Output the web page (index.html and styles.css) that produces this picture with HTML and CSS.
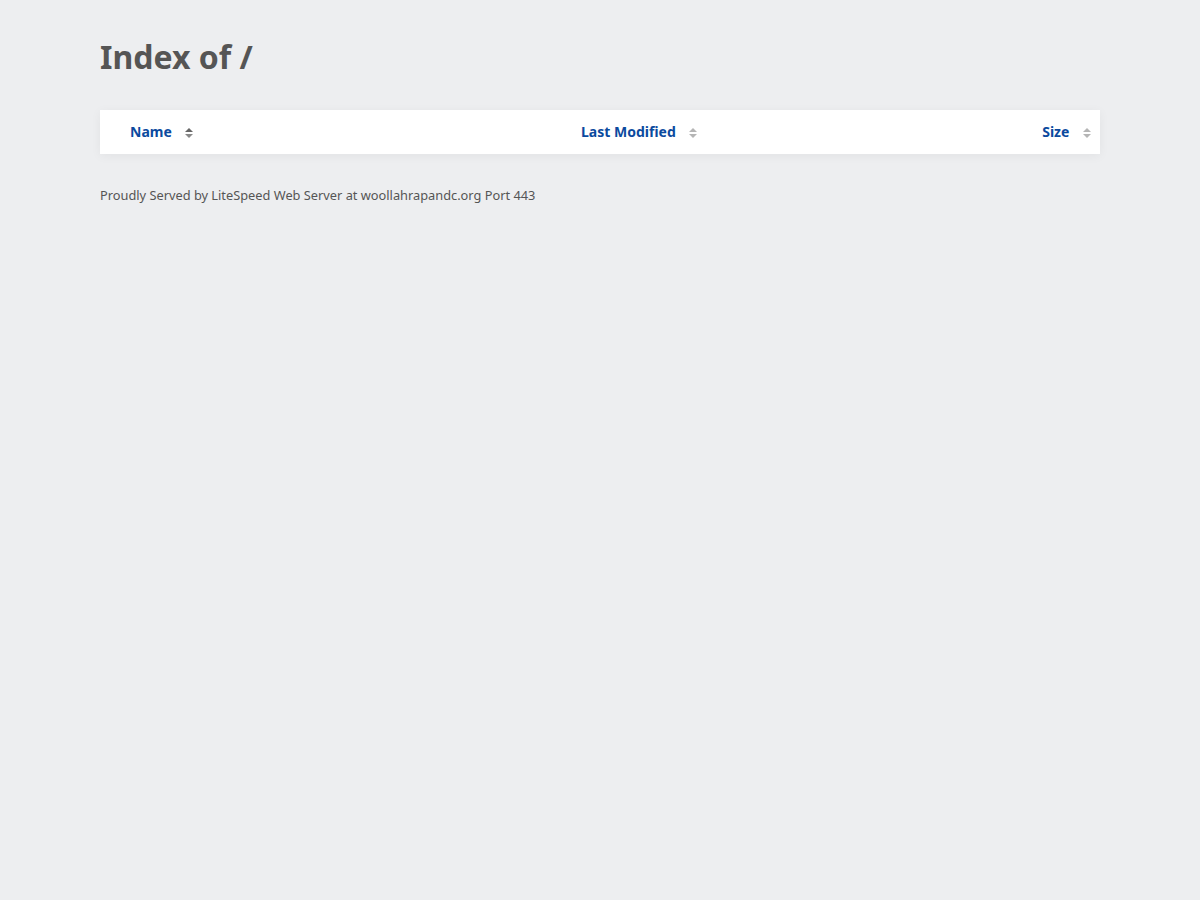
FILE: index.html
```html
<!DOCTYPE html>
<html lang="en">
  <head>
    <meta charset="UTF-8" />
    <title>Index of /</title>
    <link rel="stylesheet" href="styles.css">
  </head>
  <body>
    <div class="page">
      <h1>Index of /</h1>
      <table class="listing">
        <thead>
          <tr>
            <th class="col-name">
              <a href="?C=N&amp;O=D">Name</a>
              <span class="sort sort-asc"><i class="up"></i><i class="down"></i></span>
            </th>
            <th class="col-date">
              <a href="?C=M&amp;O=A">Last Modified</a>
              <span class="sort"><i class="up"></i><i class="down"></i></span>
            </th>
            <th class="col-size">
              <a href="?C=S&amp;O=A">Size</a>
              <span class="sort"><i class="up"></i><i class="down"></i></span>
            </th>
          </tr>
        </thead>
        <tbody></tbody>
      </table>
      <address>Proudly Served by LiteSpeed Web Server at woollahrapandc.org Port 443</address>
    </div>
  </body>
</html>
```

FILE: styles.css
```css
body {
  margin: 0;
  background-color: #edeef0;
  font-family: "Noto Sans", "Open Sans", sans-serif;
  color: #555;
}
.page {
  width: 1000px;
  padding: 36px 100px;
}
h1 {
  margin: 0 0 32px;
  font-size: 32px;
  line-height: 42px;
  font-weight: 700;
  color: #555;
}
.listing {
  width: 100%;
  border-collapse: collapse;
  background-color: white;
  box-shadow: 0 2px 10px rgba(0, 0, 0, 0.05);
}
.listing th {
  height: 44px;
  padding: 0;
  font-size: 14px;
  line-height: 20px;
  font-weight: 700;
  white-space: nowrap;
}
.listing th a {
  color: #0b4a9e;
  text-decoration: none;
}
.col-name {
  text-align: left;
  width: 451px;
  padding-left: 30px !important;
}
.col-date {
  text-align: left;
}
.col-size {
  text-align: right;
  padding-right: 9px !important;
}
.sort {
  display: inline-flex;
  flex-direction: column;
  gap: 2px;
  margin-left: 10px;
  vertical-align: 5px;
}
.sort i {
  width: 0;
  height: 0;
  border-left: 4px solid transparent;
  border-right: 4px solid transparent;
}
.sort .up {
  border-bottom: 4px solid #b5b5b5;
}
.sort .down {
  border-top: 4px solid #b5b5b5;
}
.sort-asc .up {
  border-bottom-color: #666;
}
.sort-asc .down {
  border-top-color: #888;
}
address {
  margin-top: 32px;
  font-style: normal;
  font-size: 12.8px;
  color: #555;
}
```
